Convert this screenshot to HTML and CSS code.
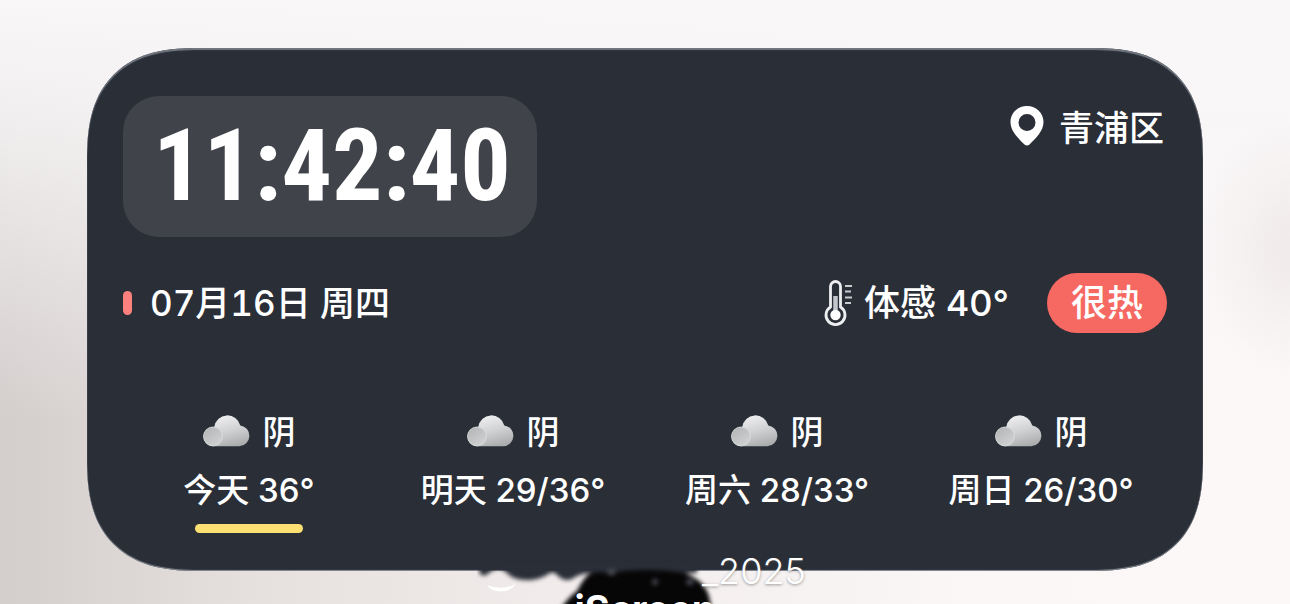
FILE: index.html
```html
<!DOCTYPE html>
<html lang="zh-CN">
<head>
<meta charset="utf-8">
<meta name="viewport" content="width=device-width, initial-scale=1">
<title>iScreen</title>
<link rel="stylesheet" href="styles.css">
</head>
<body>
<svg class="defs" width="0" height="0" aria-hidden="true">
  <defs>
    <linearGradient id="cloud-main" x1="0.3" y1="0" x2="0.7" y2="1">
      <stop offset="0" stop-color="#f1f1f2"/>
      <stop offset="0.5" stop-color="#d2d3d5"/>
      <stop offset="1" stop-color="#a9abad"/>
    </linearGradient>
    <linearGradient id="cloud-puff" x1="0" y1="0" x2="0.8" y2="1">
      <stop offset="0" stop-color="#b0b2b4"/>
      <stop offset="1" stop-color="#d2d3d4"/>
    </linearGradient>
    <symbol id="cloud" viewBox="0 0 46 32">
      <path fill="url(#cloud-main)" d="M10 32 A9.5 9.5 0 0 1 10 13 H11 A13 13 0 0 1 36.500 11.500 A10.300 10.300 0 0 1 35.500 32 Z"/>
      <circle cx="9.800" cy="22.300" r="9.300" fill="url(#cloud-puff)" stroke="#dedfe0" stroke-width="0.700"/>
    </symbol>
    <filter id="soft" x="-10%" y="-20%" width="120%" height="140%" color-interpolation-filters="sRGB"><feGaussianBlur stdDeviation="2"/></filter>
  </defs>
</svg>

<main class="widget">
  <header class="top">
    <time class="clock">11:42:40</time>
    <div class="place">
      <svg class="pin" viewBox="0 0 34 40" aria-hidden="true">
        <path fill="#fff" fill-rule="evenodd" d="M17 0 C26.500 0 33.500 7 33.500 16 C33.500 25 26 32 19.500 38.500 Q17 40.500 14.500 38.500 C8 32 0.500 25 0.500 16 C0.500 7 7.500 0 17 0 Z M17 8 A8.500 8.500 0 1 0 17 25 A8.500 8.500 0 1 0 17 8 Z"/>
      </svg>
      <span>青浦区</span>
    </div>
  </header>

  <section class="middle">
    <div class="date">07月16日 周四</div>
    <div class="feels">
      <svg class="thermo" viewBox="0 0 30 48" aria-hidden="true">
        <path d="M7.500 28 V7.500 A5 5 0 0 1 17.500 7.500 V28 A9.500 9.500 0 1 1 7.500 28 Z" fill="none" stroke="#eceef0" stroke-width="2.800"/>
        <path d="M12.500 17 V36" stroke="#c3c6cb" stroke-width="4.500"/>
        <circle cx="12.500" cy="36" r="5.200" fill="#fff"/>
        <path d="M22 7 H29 M22 12.500 H28 M22 18.500 H29 M22 24 H28" stroke="#c9ccd0" stroke-width="2"/>
      </svg>
      <span>体感 40°</span>
      <span class="badge">很热</span>
    </div>
  </section>

  <ul class="forecast">
    <li class="day today">
      <div class="sky"><svg class="cloud" aria-hidden="true"><use href="#cloud"/></svg>阴</div>
      <div class="temp">今天 36°</div>
    </li>
    <li class="day">
      <div class="sky"><svg class="cloud" aria-hidden="true"><use href="#cloud"/></svg>阴</div>
      <div class="temp">明天 29/36°</div>
    </li>
    <li class="day">
      <div class="sky"><svg class="cloud" aria-hidden="true"><use href="#cloud"/></svg>阴</div>
      <div class="temp">周六 28/33°</div>
    </li>
    <li class="day">
      <div class="sky"><svg class="cloud" aria-hidden="true"><use href="#cloud"/></svg>阴</div>
      <div class="temp">周日 26/30°</div>
    </li>
  </ul>

  <svg class="wallpaper" viewBox="0 0 340 64" aria-hidden="true">
    <g filter="url(#soft)">
      <path fill="#2a2e37" d="M4 12 H220 V26 H112 Q102 27 95 32 Q88 35 82 30 Q76 22 70 28 Q60 34 48 33 Q36 33 30 26 Q22 18 13 25 Q6 32 2 25 Z"/>
      <path fill="#070607" d="M74 80 Q84 56 100 44 Q106 32 112 27 Q118 24 130 26 Q170 20 208 26 Q224 32 230 44 Q235 54 235 80 Z"/>
      <path fill="#45484f" d="M130 25 A4 3 0 1 1 139 25 A4 3 0 1 1 130 25 Z M175 35 A3 3 0 1 1 181 35 A3 3 0 1 1 175 35 Z M209 35 A4 3 0 1 1 217 35 A4 3 0 1 1 209 35 Z"/>
    </g>
    <path fill="#fff" d="M10 38 Q24 44 39 37 Q34 44.500 24 44.500 Q14 44.500 10 38 Z"/>
  </svg>
  <span class="watermark">_2025</span>
</main>
<p class="app-name">iScreen</p>
</body>
</html>
```
FILE: styles.css
```css
* {
  box-sizing: border-box;
}

body {
  margin: 0;
  padding: 48px 87px 0;
  height: 100vh;
  overflow: hidden;
  color: #fff;
  font: 500 36px/1 Inter, "Noto Sans CJK SC", sans-serif;
  background:
    radial-gradient(ellipse 90px 130px at 100% 41%, #f0eaea, transparent),
    linear-gradient(to bottom, #f9f7f8 0%, #f8f6f7cc 20%, transparent 70%),
    linear-gradient(to right, #d3cdcc 0%, #e6e0df 20%, #f2ecec 45%, #fbf7f7 75%, #fcf8f8 100%);
}

.defs {
  position: absolute;
}

.widget {
  position: relative;
  padding: 48px 36px 38px;
  border-radius: 92px;
  background: #2a2e37;
  box-shadow: inset 0 2px 1px #737983, inset 0 -1px 1px #8b9099;
}

@supports (corner-shape: superellipse(1.3)) {
  .widget {
    border-radius: 112px;
    corner-shape: superellipse(1.35);
  }
}

.top,
.middle,
.place,
.feels,
.date,
.sky {
  display: flex;
  align-items: center;
}

.top,
.middle {
  justify-content: space-between;
}

.top {
  align-items: flex-start;
}

.clock {
  padding: 20px 26px 21px 30px;
  border-radius: 36px;
  background: #41434a;
  font: 700 100px/100px "Roboto Condensed", "Liberation Sans Narrow", Roboto, sans-serif;
}

.place {
  gap: 15px;
  padding: 8px 3px 0 0;
  font-size: 35px;
}

.place span {
  padding-top: 3px;
  line-height: 42px;
}

.pin {
  width: 34px;
  height: 40px;
  margin-bottom: 2px;
}

.middle {
  margin-top: 36px;
}

.date {
  gap: 18px;
  font-size: 35px;
  font-variant-numeric: tabular-nums;
}

.date::before {
  content: "";
  width: 9px;
  height: 24px;
  border-radius: 5px;
  background: #fa817e;
}

.thermo {
  width: 30px;
  height: 48px;
  margin-right: 11px;
}

.badge {
  margin-left: 38px;
  padding: 0 24px;
  border-radius: 30px;
  background: #f66963;
  line-height: 60px;
}

.forecast {
  display: grid;
  grid-template-columns: repeat(4, 1fr);
  margin: 78px -6px 0;
  padding: 0;
  list-style: none;
  font-size: 33px;
}

.day {
  display: flex;
  flex-direction: column;
  align-items: center;
  gap: 16px;
}

.sky {
  gap: 13px;
  line-height: 42px;
}

.cloud {
  width: 47px;
  height: 34px;
  margin-bottom: 4px;
}

.temp {
  line-height: 42px;
}

.today::after {
  content: "";
  width: 108px;
  height: 9px;
  margin-top: -3px;
  border-radius: 5px;
  background: #fde072;
}

.wallpaper {
  position: absolute;
  left: calc(50% - 168px);
  bottom: -40px;
  width: 340px;
  height: 64px;
}

.watermark {
  position: absolute;
  left: calc(50% + 57px);
  bottom: -18px;
  font-weight: 300;
  line-height: 36px;
  text-shadow: 0 1px 3px #55555599;
}

.app-name {
  position: relative;
  margin: 17px 0 0;
  font-size: 38px;
  font-weight: 700;
  line-height: 42px;
  text-align: center;
}
```
